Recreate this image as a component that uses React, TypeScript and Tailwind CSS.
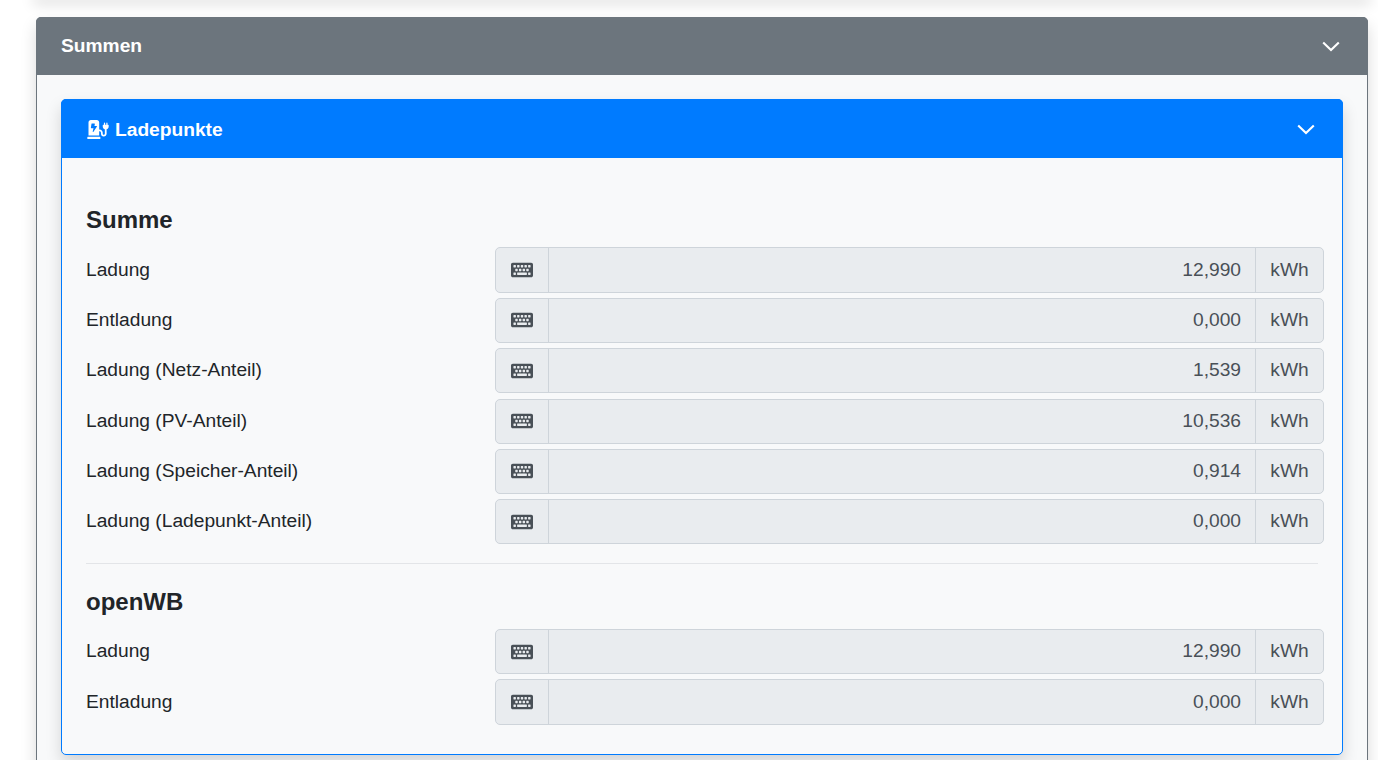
import { FaChargingStation, FaKeyboard } from "react-icons/fa";

const sumRows = [
  { label: "Ladung", value: "12,990" },
  { label: "Entladung", value: "0,000" },
  { label: "Ladung (Netz-Anteil)", value: "1,539" },
  { label: "Ladung (PV-Anteil)", value: "10,536" },
  { label: "Ladung (Speicher-Anteil)", value: "0,914" },
  { label: "Ladung (Ladepunkt-Anteil)", value: "0,000" },
];

const wbRows = [
  { label: "Ladung", value: "12,990" },
  { label: "Entladung", value: "0,000" },
];

function Chevron() {
  return (
    <svg width="18" height="11" viewBox="0 0 18 11" fill="none" className="shrink-0">
      <path d="M1.2 1.4L9 9l7.8-7.6" stroke="white" strokeWidth="2.1" />
    </svg>
  );
}

function Row({ label, value }: { label: string; value: string }) {
  return (
    <div className="mr-[-6px] mb-[5.2px] flex h-[45.2px] items-center">
      <div className="w-[409px] shrink-0 text-[#212529]">{label}</div>
      <div className="flex h-full flex-1 rounded-[5px] border border-[#ced4da] bg-[#e9ecef] text-[#495057]">
        <div className="flex w-[53px] shrink-0 items-center justify-center border-r border-[#ced4da]">
          <FaKeyboard className="h-[22px] w-[22px]" />
        </div>
        <div className="flex flex-1 items-center justify-end pr-[14px]">{value}</div>
        <div className="flex w-[68px] shrink-0 items-center justify-center border-l border-[#ced4da]">kWh</div>
      </div>
    </div>
  );
}

export default function App() {
  return (
    <div className="h-[760px] overflow-hidden bg-white pl-[36px] pr-[10px] font-['Liberation_Sans',Arial,sans-serif] text-[19.2px] leading-[28.8px]">
      {/* navbar card above, scrolled out of view */}
      <div className="h-0 shadow-[0_0_14px_3px_rgba(0,0,0,0.2)]" />

      <div className="mt-[17px] rounded-[5px] border border-[#6c757d] bg-[#f8f9fa] shadow-[0_8px_16px_rgba(0,0,0,0.15)]">
        <div className="-mx-px -mt-px flex h-[58px] items-center justify-between rounded-t-[5px] bg-[#6c757d] pl-[25px] pr-[28px] font-bold text-white">
          <span>Summen</span>
          <Chevron />
        </div>

        <div className="px-[24px] pt-[24px] pb-[40px]">
          <div className="rounded-[5px] border border-[#007bff] bg-[#f8f9fa] shadow-[0_8px_16px_rgba(0,0,0,0.15)]">
            <div className="-mx-px -mt-px flex h-[59px] items-center justify-between rounded-t-[5px] bg-[#007bff] pl-[26px] pr-[28px] pt-[2px] font-bold text-white">
              <span className="mt-[1px] flex items-center gap-[6px]">
                <FaChargingStation className="h-[19px] w-[22px]" />
                Ladepunkte
              </span>
              <Chevron />
            </div>

            <div className="pl-[24px] pr-[24px] pt-[45px] pb-[24.5px]">
              <h3 className="mb-[11.4px] text-[24px] font-bold leading-[33px] text-[#212529]">Summe</h3>
              {sumRows.map((r) => (
                <Row key={r.label} label={r.label} value={r.value} />
              ))}
              <hr className="mt-[18.6px] mb-[21px] border-t border-[#e3e5e8]" />
              <h3 className="mb-[11px] text-[24px] font-bold leading-[33px] text-[#212529]">openWB</h3>
              {wbRows.map((r) => (
                <Row key={r.label} label={r.label} value={r.value} />
              ))}
            </div>
          </div>
        </div>
      </div>
    </div>
  );
}
